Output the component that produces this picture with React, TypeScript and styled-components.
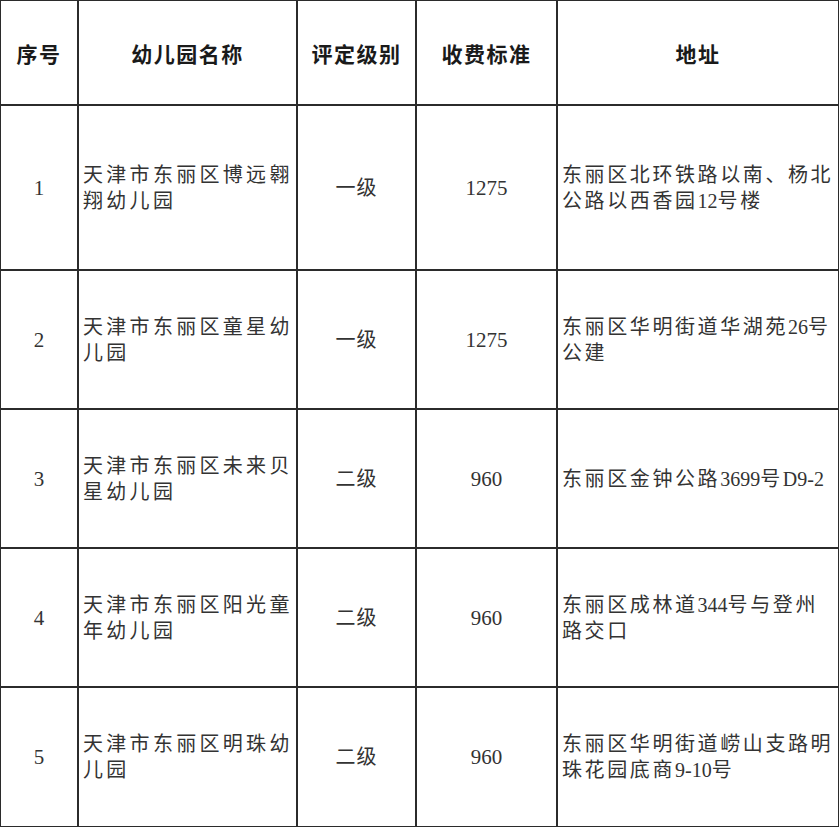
import { Fragment } from "react";
import styled, { createGlobalStyle } from "styled-components";

type School = {
  no: number;
  name: string;
  level: string;
  fee: string;
  address: string;
};

const schools: School[] = [
  { no: 1, name: "天津市东丽区博远翱翔幼儿园", level: "一级", fee: "1275", address: "东丽区北环铁路以南、杨北公路以西香园12号楼" },
  { no: 2, name: "天津市东丽区童星幼儿园", level: "一级", fee: "1275", address: "东丽区华明街道华湖苑26号公建" },
  { no: 3, name: "天津市东丽区未来贝星幼儿园", level: "二级", fee: "960", address: "东丽区金钟公路3699号D9-2" },
  { no: 4, name: "天津市东丽区阳光童年幼儿园", level: "二级", fee: "960", address: "东丽区成林道344号与登州路交口" },
  { no: 5, name: "天津市东丽区明珠幼儿园", level: "二级", fee: "960", address: "东丽区华明街道崂山支路明珠花园底商9-10号" },
];

const headers = ["序号", "幼儿园名称", "评定级别", "收费标准", "地址"];

const GlobalStyle = createGlobalStyle`
  html, body {
    margin: 0;
    padding: 0;
    background: #fff;
  }
  body {
    font-family: "Liberation Serif", "Noto Sans CJK SC", serif;
  }
`;

const Table = styled.div`
  display: grid;
  grid-template-columns: 76px 217px 117px 139px 280px;
  grid-template-rows: 103px 163px 137px 137px 137px 138px;
  gap: 2px;
  padding: 1px;
  width: 839px;
  height: 827px;
  box-sizing: border-box;
  background: #2b2b2b;
`;

const HeadCell = styled.div`
  display: flex;
  align-items: center;
  justify-content: center;
  background: #fff;
  font-family: "Noto Sans CJK SC", sans-serif;
  font-weight: 700;
  font-size: 21px;
  letter-spacing: 1.5px;
  color: #1a1a1a;
`;

const Cell = styled.div<{ $left?: boolean; $spacing?: number }>`
  display: flex;
  align-items: center;
  justify-content: ${(p) => (p.$left ? "flex-start" : "center")};
  padding: ${(p) => (p.$left ? "0 2px 0 4px" : "0")};
  background: #fff;
  font-size: 20px;
  line-height: 26px;
  letter-spacing: ${(p) => p.$spacing ?? 0}px;
  color: #333;
  box-sizing: border-box;
`;

const NumCell = styled(Cell)`
  font-size: 21px;
`;

const Text = styled.span`
  display: block;
  width: 100%;
  word-break: break-all;
`;

const Latin = styled.span`
  letter-spacing: 0;
`;

// CJK runs keep the wide spacing, latin runs (digits, codes) stay tight
const Runs = ({ text }: { text: string }) => (
  <>
    {text.split(/([0-9A-Za-z-]+)/).map((part, i) =>
      /^[0-9A-Za-z-]+$/.test(part) ? <Latin key={i}>{part}</Latin> : <Fragment key={i}>{part}</Fragment>
    )}
  </>
);

export default function App() {
  return (
    <>
      <GlobalStyle />
      <Table>
        {headers.map((h) => (
          <HeadCell key={h}>{h}</HeadCell>
        ))}
        {schools.map((s) => (
          <Fragment key={s.no}>
            <NumCell>{s.no}</NumCell>
            <Cell $left $spacing={3.3}>
              <Text>{s.name}</Text>
            </Cell>
            <Cell $spacing={1}>{s.level}</Cell>
            <NumCell>{s.fee}</NumCell>
            <Cell $left $spacing={2.6}>
              <Text>
                <Runs text={s.address} />
              </Text>
            </Cell>
          </Fragment>
        ))}
      </Table>
    </>
  );
}
